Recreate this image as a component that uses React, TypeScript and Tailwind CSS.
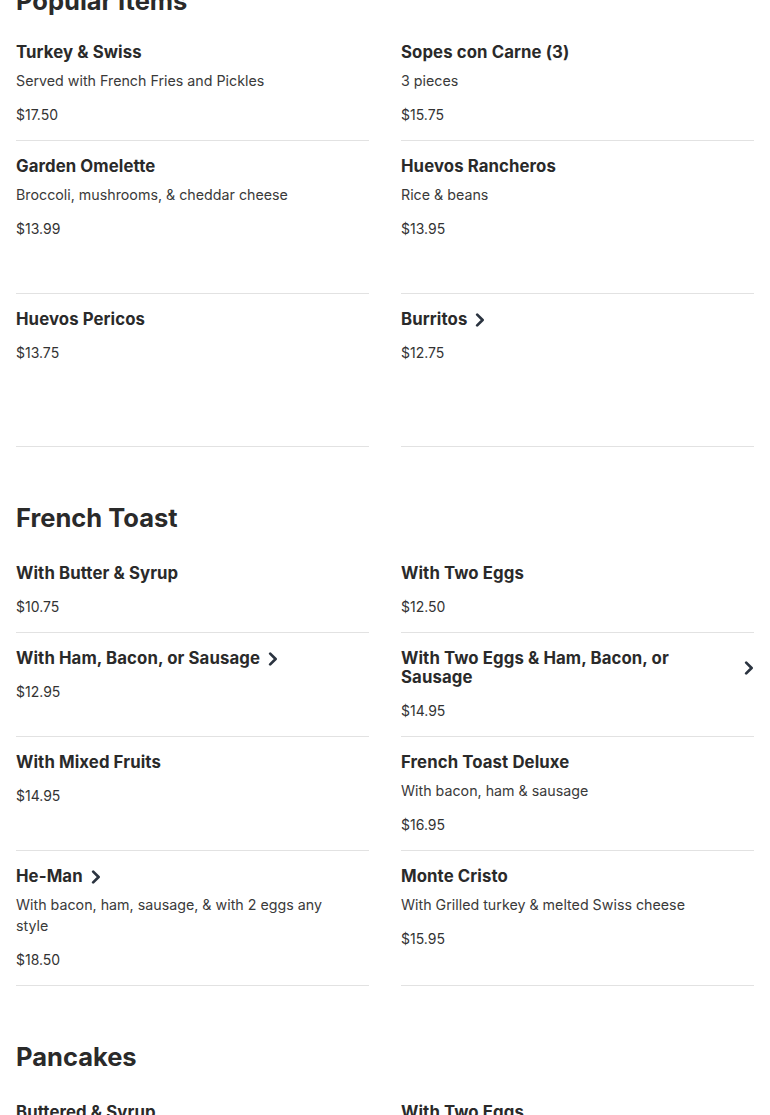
import React from "react";

type Item = { name: string; desc?: string; price: string; chevron?: boolean };
type Section = { title: string; items: Item[]; minH?: number[]; headMb: string; headMt: string };

const Chevron = () => (
  <svg width="10" height="14" viewBox="0 0 10 14" className="shrink-0 text-[#2b3440]" fill="none">
    <polyline points="2.2,1.6 7.6,7 2.2,12.4" stroke="currentColor" strokeWidth="2.7" strokeLinecap="round" strokeLinejoin="round" />
  </svg>
);

const sections: Section[] = [
  {
    title: "Popular Items",
    headMt: "-mt-[15px]",
    headMb: "mb-[10px]",
    minH: [0, 0, 153, 153, 153, 153],
    items: [
      { name: "Turkey & Swiss", desc: "Served with French Fries and Pickles", price: "$17.50" },
      { name: "Sopes con Carne (3)", desc: "3 pieces", price: "$15.75" },
      { name: "Garden Omelette", desc: "Broccoli, mushrooms, & cheddar cheese", price: "$13.99" },
      { name: "Huevos Rancheros", desc: "Rice & beans", price: "$13.95" },
      { name: "Huevos Pericos", price: "$13.75" },
      { name: "Burritos", price: "$12.75", chevron: true },
    ],
  },
  {
    title: "French Toast",
    headMt: "mt-[55px]",
    headMb: "mb-[14px]",
    items: [
      { name: "With Butter & Syrup", price: "$10.75" },
      { name: "With Two Eggs", price: "$12.50" },
      { name: "With Ham, Bacon, or Sausage", price: "$12.95", chevron: true },
      { name: "With Two Eggs & Ham, Bacon, or Sausage", price: "$14.95", chevron: true },
      { name: "With Mixed Fruits", price: "$14.95" },
      { name: "French Toast Deluxe", desc: "With bacon, ham & sausage", price: "$16.95" },
      { name: "He-Man", desc: "With bacon, ham, sausage, & with 2 eggs any style", price: "$18.50", chevron: true },
      { name: "Monte Cristo", desc: "With Grilled turkey & melted Swiss cheese", price: "$15.95" },
    ],
  },
  {
    title: "Pancakes",
    headMt: "mt-[55px]",
    headMb: "mb-[14px]",
    items: [
      { name: "Buttered & Syrup", price: "$9.95" },
      { name: "With Two Eggs", price: "$11.95" },
      { name: "With Ham, Bacon, or Sausage", price: "$12.95" },
      { name: "With Two Eggs & Ham, Bacon, or Sausage", price: "$14.95" },
    ],
  },
];

function MenuItem({ item, minH }: { item: Item; minH?: number }) {
  return (
    <div
      className="border-b border-[#e2e2e2] pt-4 pb-[15px] flex flex-col"
      style={minH ? { minHeight: minH } : undefined}
    >
      <div className="flex items-center gap-2">
        <h3 className="text-[16.75px] leading-[19px] font-bold text-[#2a2a2a] tracking-[0.1px]">{item.name}</h3>
        {item.chevron && <Chevron />}
      </div>
      {item.desc && (
        <p className="mt-2 max-w-[336px] text-[14.25px] leading-[21px] text-[#3a3a3a]">{item.desc}</p>
      )}
      <p className="mt-[14px] text-[14px] leading-[20px] text-[#333333]">{item.price}</p>
    </div>
  );
}

export default function App() {
  return (
    <div className="bg-white min-h-screen px-4 overflow-hidden" style={{ fontFamily: "Inter, 'Noto Sans', sans-serif" }}>
      {sections.map((s, si) => (
        <section key={si}>
          <h2 className={`${s.headMt} ${s.headMb} text-[25.5px] leading-[32px] font-bold text-[#2a2a2a]`}>{s.title}</h2>
          <div className="grid grid-cols-2 gap-x-8">
            {s.items.map((it, i) => (
              <MenuItem key={i} item={it} minH={s.minH ? s.minH[i] : undefined} />
            ))}
          </div>
        </section>
      ))}
    </div>
  );
}
